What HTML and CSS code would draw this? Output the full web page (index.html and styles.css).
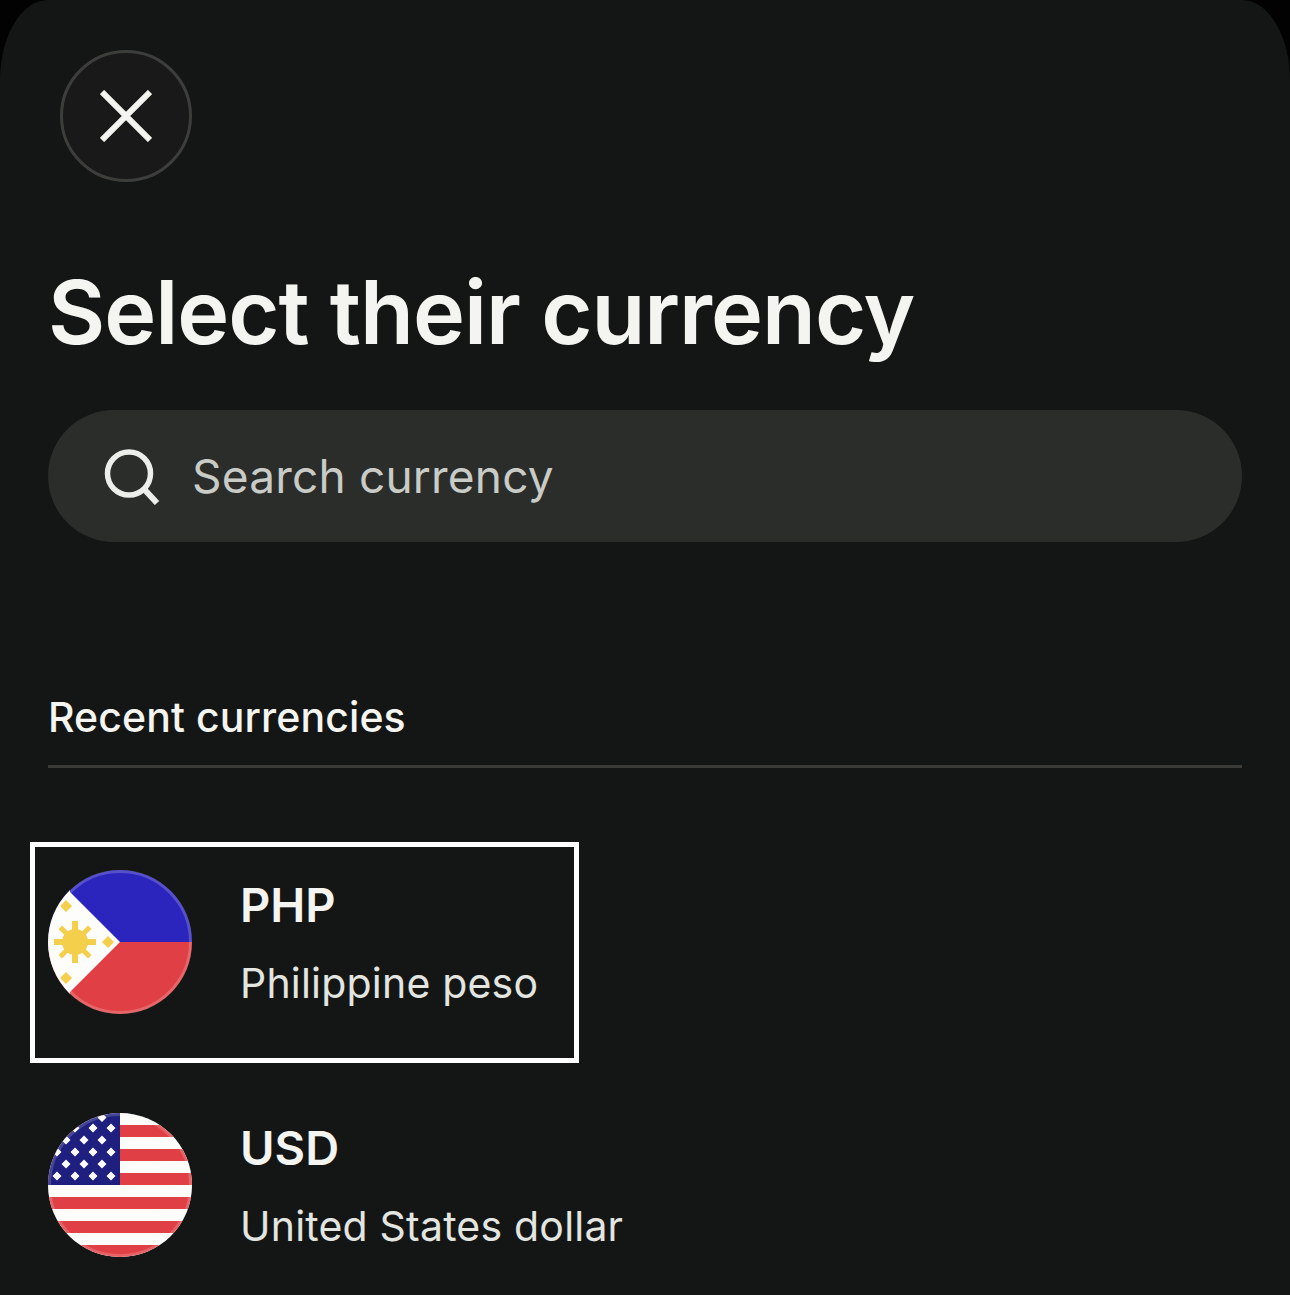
FILE: index.html
```html
<!DOCTYPE html>
<html lang="en">
<head>
<meta charset="utf-8">
<title>Select their currency</title>
<link rel="stylesheet" href="styles.css">
</head>
<body>
<main class="sheet">
  <button class="close" aria-label="Close">
    <svg class="close-icon" viewBox="0 0 52 52" width="52" height="52"><path d="M2 2L50 50M50 2L2 50" stroke="#f4f5f1" stroke-width="6" fill="none"/></svg>
  </button>
  <h1 class="title">Select their currency</h1>
  <div class="search">
    <svg class="search-icon" viewBox="0 0 56 56" width="56" height="56"><circle cx="25" cy="24.500" r="21.500" stroke="#eceeea" stroke-width="5.500" fill="none"/><path d="M40 40L53 54" stroke="#eceeea" stroke-width="6" fill="none"/></svg>
    <span class="placeholder">Search currency</span>
  </div>
  <h2 class="section">Recent currencies</h2>
  <div class="rule"></div>
  <div class="row row-first">
    <div class="highlight"></div>
    <svg class="flag" viewBox="0 0 144 144" width="144" height="144">
      <defs><clipPath id="ph"><circle cx="72" cy="72" r="72"/></clipPath></defs>
      <g clip-path="url(#ph)">
        <rect width="144" height="72" fill="#2c25bd"/>
        <rect y="72" width="144" height="72" fill="#e04045"/>
        <path d="M0 0H22V22L72 72L22 122V144H0Z" fill="#fdfdfb"/>
        <g fill="#f4cf4c">
          <circle cx="27" cy="72" r="13"/>
          <path d="M24 51h6v42h-6zM6 69h42v6H6z"/>
          <path d="M10.500 59l3.500-3.500L43.500 85 40 88.500zM40 55.500l3.500 3.500L14 88.500 10.500 85z"/>
          <path d="M12 36l6-6 6 6-6 6zM54 72l6-6 6 6-6 6zM12 108l6-6 6 6-6 6z"/>
        </g>
      </g>
      <circle cx="72" cy="72" r="70.500" fill="none" stroke="#fff" stroke-opacity=".2" stroke-width="3"/>
    </svg>
    <div class="info">
      <div class="code">PHP</div>
      <div class="name">Philippine peso</div>
    </div>
  </div>
  <div class="row row-second">
    <svg class="flag" viewBox="0 0 144 144" width="144" height="144">
      <defs><clipPath id="us"><circle cx="72" cy="72" r="72"/></clipPath></defs>
      <g clip-path="url(#us)">
        <rect width="144" height="144" fill="#fdfdfb"/>
        <g fill="#e04045">
          <rect y="12" width="144" height="12"/>
          <rect y="36" width="144" height="12"/>
          <rect y="60" width="144" height="12"/>
          <rect y="84" width="144" height="12"/>
          <rect y="108" width="144" height="12"/>
          <rect y="132" width="144" height="12"/>
        </g>
        <rect width="72" height="72" fill="#1f1f80"/>
        <path fill="#fdfdfb" d="M54 0l4.500 4.500-4.500 4.500-4.500-4.500zM27 10.500l4.500 4.500-4.500 4.500-4.500-4.500zM45 10.500l4.500 4.500-4.500 4.500-4.500-4.500zM63 10.500l4.500 4.500-4.500 4.500-4.500-4.500zM18 22.500l4.500 4.500-4.500 4.500-4.500-4.500zM36 22.500l4.500 4.500-4.500 4.500-4.500-4.500zM54 22.500l4.500 4.500-4.500 4.500-4.500-4.500zM9 34.500l4.500 4.500-4.500 4.500-4.500-4.500zM27 34.500l4.500 4.500-4.500 4.500-4.500-4.500zM45 34.500l4.500 4.500-4.500 4.500-4.500-4.500zM63 34.500l4.500 4.500-4.500 4.500-4.500-4.500zM18 46.500l4.500 4.500-4.500 4.500-4.500-4.500zM36 46.500l4.500 4.500-4.500 4.500-4.500-4.500zM54 46.500l4.500 4.500-4.500 4.500-4.500-4.500zM9 58.500l4.500 4.500-4.500 4.500-4.500-4.500zM27 58.500l4.500 4.500-4.500 4.500-4.500-4.500zM45 58.500l4.500 4.500-4.500 4.500-4.500-4.500zM63 58.500l4.500 4.500-4.500 4.500-4.500-4.500z"/>
      </g>
      <circle cx="72" cy="72" r="70.500" fill="none" stroke="#fff" stroke-opacity=".18" stroke-width="3"/>
    </svg>
    <div class="info">
      <div class="code">USD</div>
      <div class="name">United States dollar</div>
    </div>
  </div>
</main>
</body>
</html>
```
FILE: styles.css
```css
* { box-sizing: border-box; }
html, body { margin: 0; height: 100%; background: #010201; }
body { width: 1290px; height: 1295px; overflow: hidden; font-family: Inter, "Liberation Sans", sans-serif; }
.sheet {
  height: 1295px;
  background: #141615;
  border-radius: 48px 48px 0 0 / 80px 80px 0 0;
  padding: 50px 48px 0;
  color: #f4f5f1;
}
.close {
  display: flex;
  align-items: center;
  justify-content: center;
  width: 132px;
  height: 132px;
  margin-left: 12px;
  padding: 0;
  border: 3px solid #3d3e3c;
  border-radius: 50%;
  background: #181918;
}
.close-icon { display: block; }
.title {
  margin: 72px 0 0 0;
  font-size: 88px;
  line-height: 116px;
  font-weight: 600;
  letter-spacing: -1px;
  color: #f4f5f1;
}
.search {
  display: flex;
  align-items: center;
  gap: 32px;
  height: 132px;
  margin-top: 40px;
  padding-left: 56px;
  border-radius: 66px;
  background: #2b2d2b;
}
.search-icon { display: block; flex: none; margin-top: 2px; }
.placeholder { font-size: 46px; color: #c9cbc6; letter-spacing: 0.2px; }
.section {
  margin: 150px 0 0 0;
  font-size: 41px;
  line-height: 50px;
  font-weight: 500;
  letter-spacing: 0.1px;
  color: #f4f5f1;
}
.rule { height: 3px; margin-top: 23px; background: #3a3b39; }
.row { position: relative; display: flex; align-items: center; gap: 49px; height: 144px; }
.row-first { margin-top: 102px; }
.row-second { margin-top: 99px; }
.highlight {
  position: absolute;
  left: -18px;
  top: -28px;
  width: 549px;
  height: 221px;
  border: 5px solid #fff;
}
.flag { display: block; flex: none; }
.info { display: flex; flex-direction: column; gap: 26px; margin-left: -1px; }
.code { font-size: 47px; line-height: 56px; font-weight: 600; color: #f4f5f1; }
.name { font-size: 41px; line-height: 48px; color: #e3e5e0; letter-spacing: 0.2px; }
```
